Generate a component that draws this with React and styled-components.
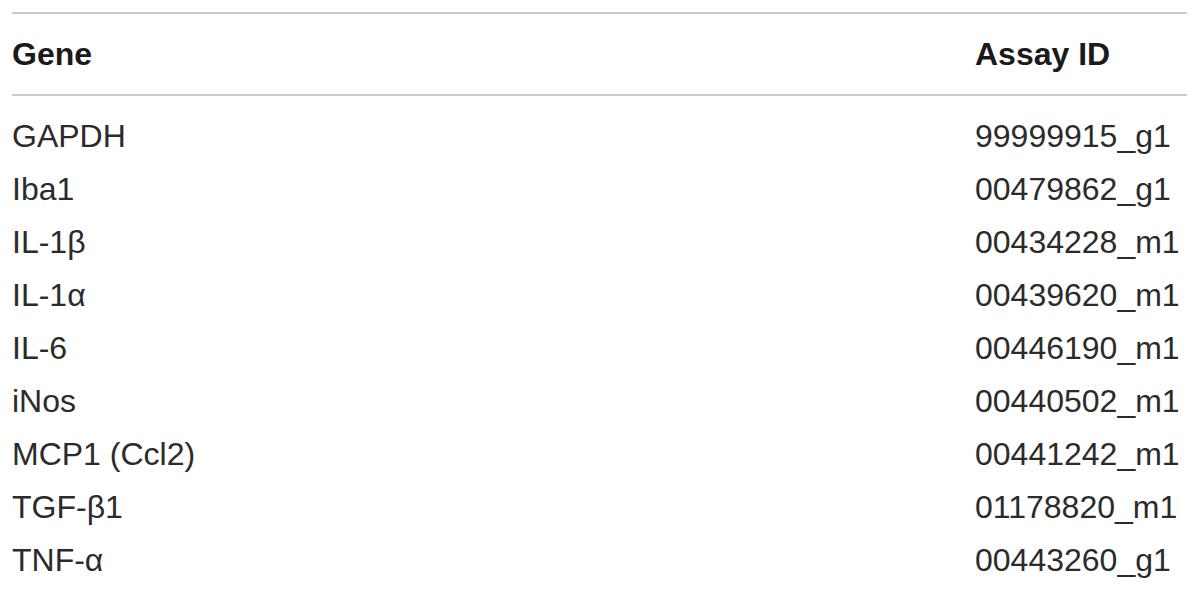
import React from "react";
import styled, { createGlobalStyle } from "styled-components";

const GlobalStyle = createGlobalStyle`
  html, body {
    margin: 0;
    padding: 0;
    background: #ffffff;
  }
  body {
    font-family: "Liberation Sans", Arial, sans-serif;
    color: #222222;
  }
`;

const Page = styled.div`
  width: 1200px;
  height: 599px;
  padding: 12px 13px 0 12px;
  box-sizing: border-box;
  overflow: hidden;
`;

const Table = styled.div`
  border-top: 2px solid #cccccc;
`;

const Row = styled.div`
  display: grid;
  grid-template-columns: 963px 1fr;
  align-items: center;
  height: ${(props) => props.height}px;
  font-size: 32px;
  font-weight: ${(props) => (props.head ? 700 : 400)};
  color: ${(props) => (props.head ? "#1a1a1a" : "#2b2b2b")};
`;

const Head = styled(Row)`
  border-bottom: 2px solid #cccccc;
  padding-top: 1px;
  box-sizing: border-box;
`;

const Body = styled.div`
  padding-top: 14px;
`;

const Cell = styled.div`
  white-space: nowrap;
`;

const rows = [
  ["GAPDH", "99999915_g1"],
  ["Iba1", "00479862_g1"],
  ["IL-1β", "00434228_m1"],
  ["IL-1α", "00439620_m1"],
  ["IL-6", "00446190_m1"],
  ["iNos", "00440502_m1"],
  ["MCP1 (Ccl2)", "00441242_m1"],
  ["TGF-β1", "01178820_m1"],
  ["TNF-α", "00443260_g1"],
];

export default function App() {
  return (
    <>
      <GlobalStyle />
      <Page>
        <Table>
          <Head head height={82}>
            <Cell>Gene</Cell>
            <Cell>Assay ID</Cell>
          </Head>
          <Body>
            {rows.map(([gene, id]) => (
              <Row key={gene} height={53}>
                <Cell>{gene}</Cell>
                <Cell>{id}</Cell>
              </Row>
            ))}
          </Body>
        </Table>
      </Page>
    </>
  );
}
